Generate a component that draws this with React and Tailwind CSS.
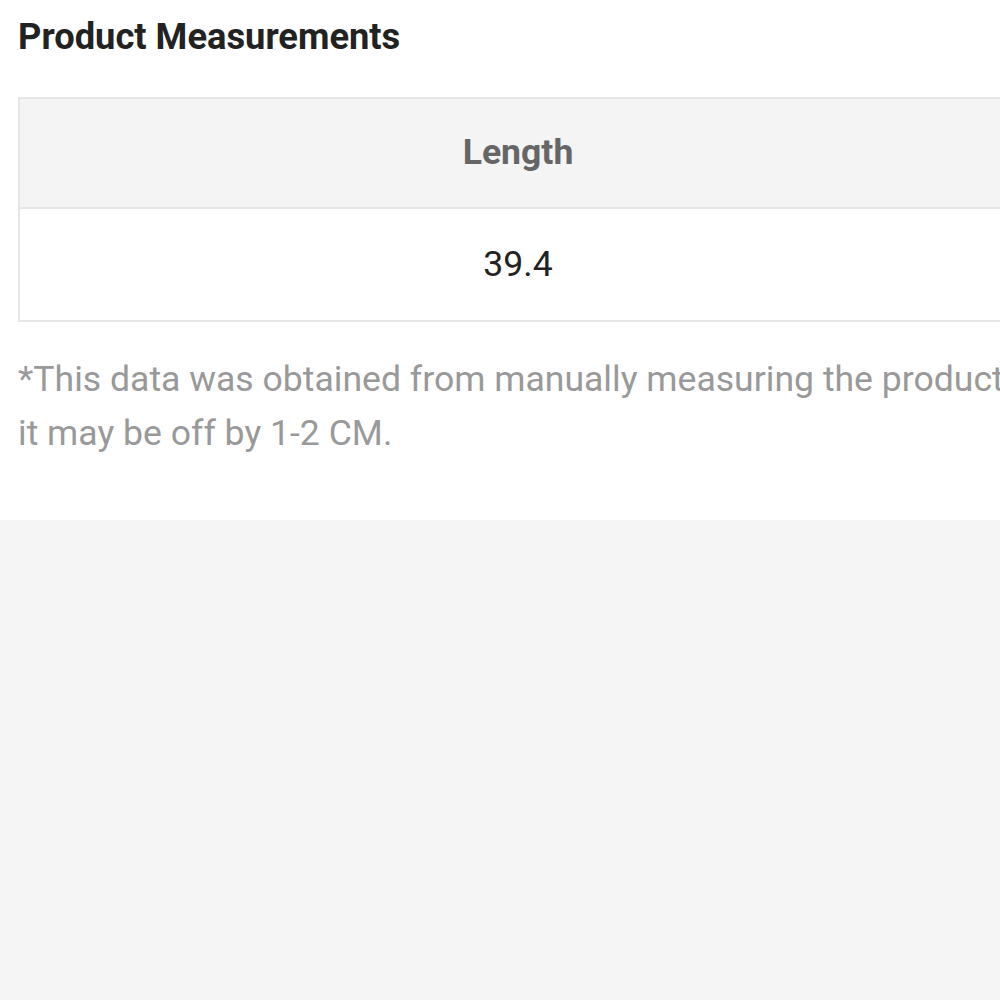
import React from 'react';

const measurements = [{ label: 'Length', value: '39.4' }];

export default function App() {
    return (
        <div className="min-h-[1000px] w-full overflow-hidden bg-[#f5f5f5] font-['Roboto',sans-serif]">
            {/* Measurements card */}
            <div className="h-[520px] bg-white pl-[18px] pt-[15px]">
                <h2 className="text-[36.3px] font-bold leading-[44px] text-[#222]">Product Measurements</h2>

                <table className="mt-[38px] w-[1000px] border-collapse border-2 border-[#e6e6e6] text-center">
                    <thead>
                        <tr className="bg-[#f4f4f4]">
                            {measurements.map((m) => (
                                <th
                                    key={m.label}
                                    className="h-[110px] border-2 border-[#e6e6e6] text-[35.6px] font-bold text-[#666]"
                                >
                                    {m.label}
                                </th>
                            ))}
                        </tr>
                    </thead>
                    <tbody>
                        <tr>
                            {measurements.map((m) => (
                                <td
                                    key={m.label}
                                    className="h-[113px] border-2 border-[#e6e6e6] text-[35.6px] text-[#222]"
                                >
                                    {m.value}
                                </td>
                            ))}
                        </tr>
                    </tbody>
                </table>

                <p className="mt-[30px] w-[1000px] text-[35.6px] leading-[54px] text-[#999]">
                    *This data was obtained from manually measuring the product, it may be off by 1-2 CM.
                </p>
            </div>
        </div>
    );
}
